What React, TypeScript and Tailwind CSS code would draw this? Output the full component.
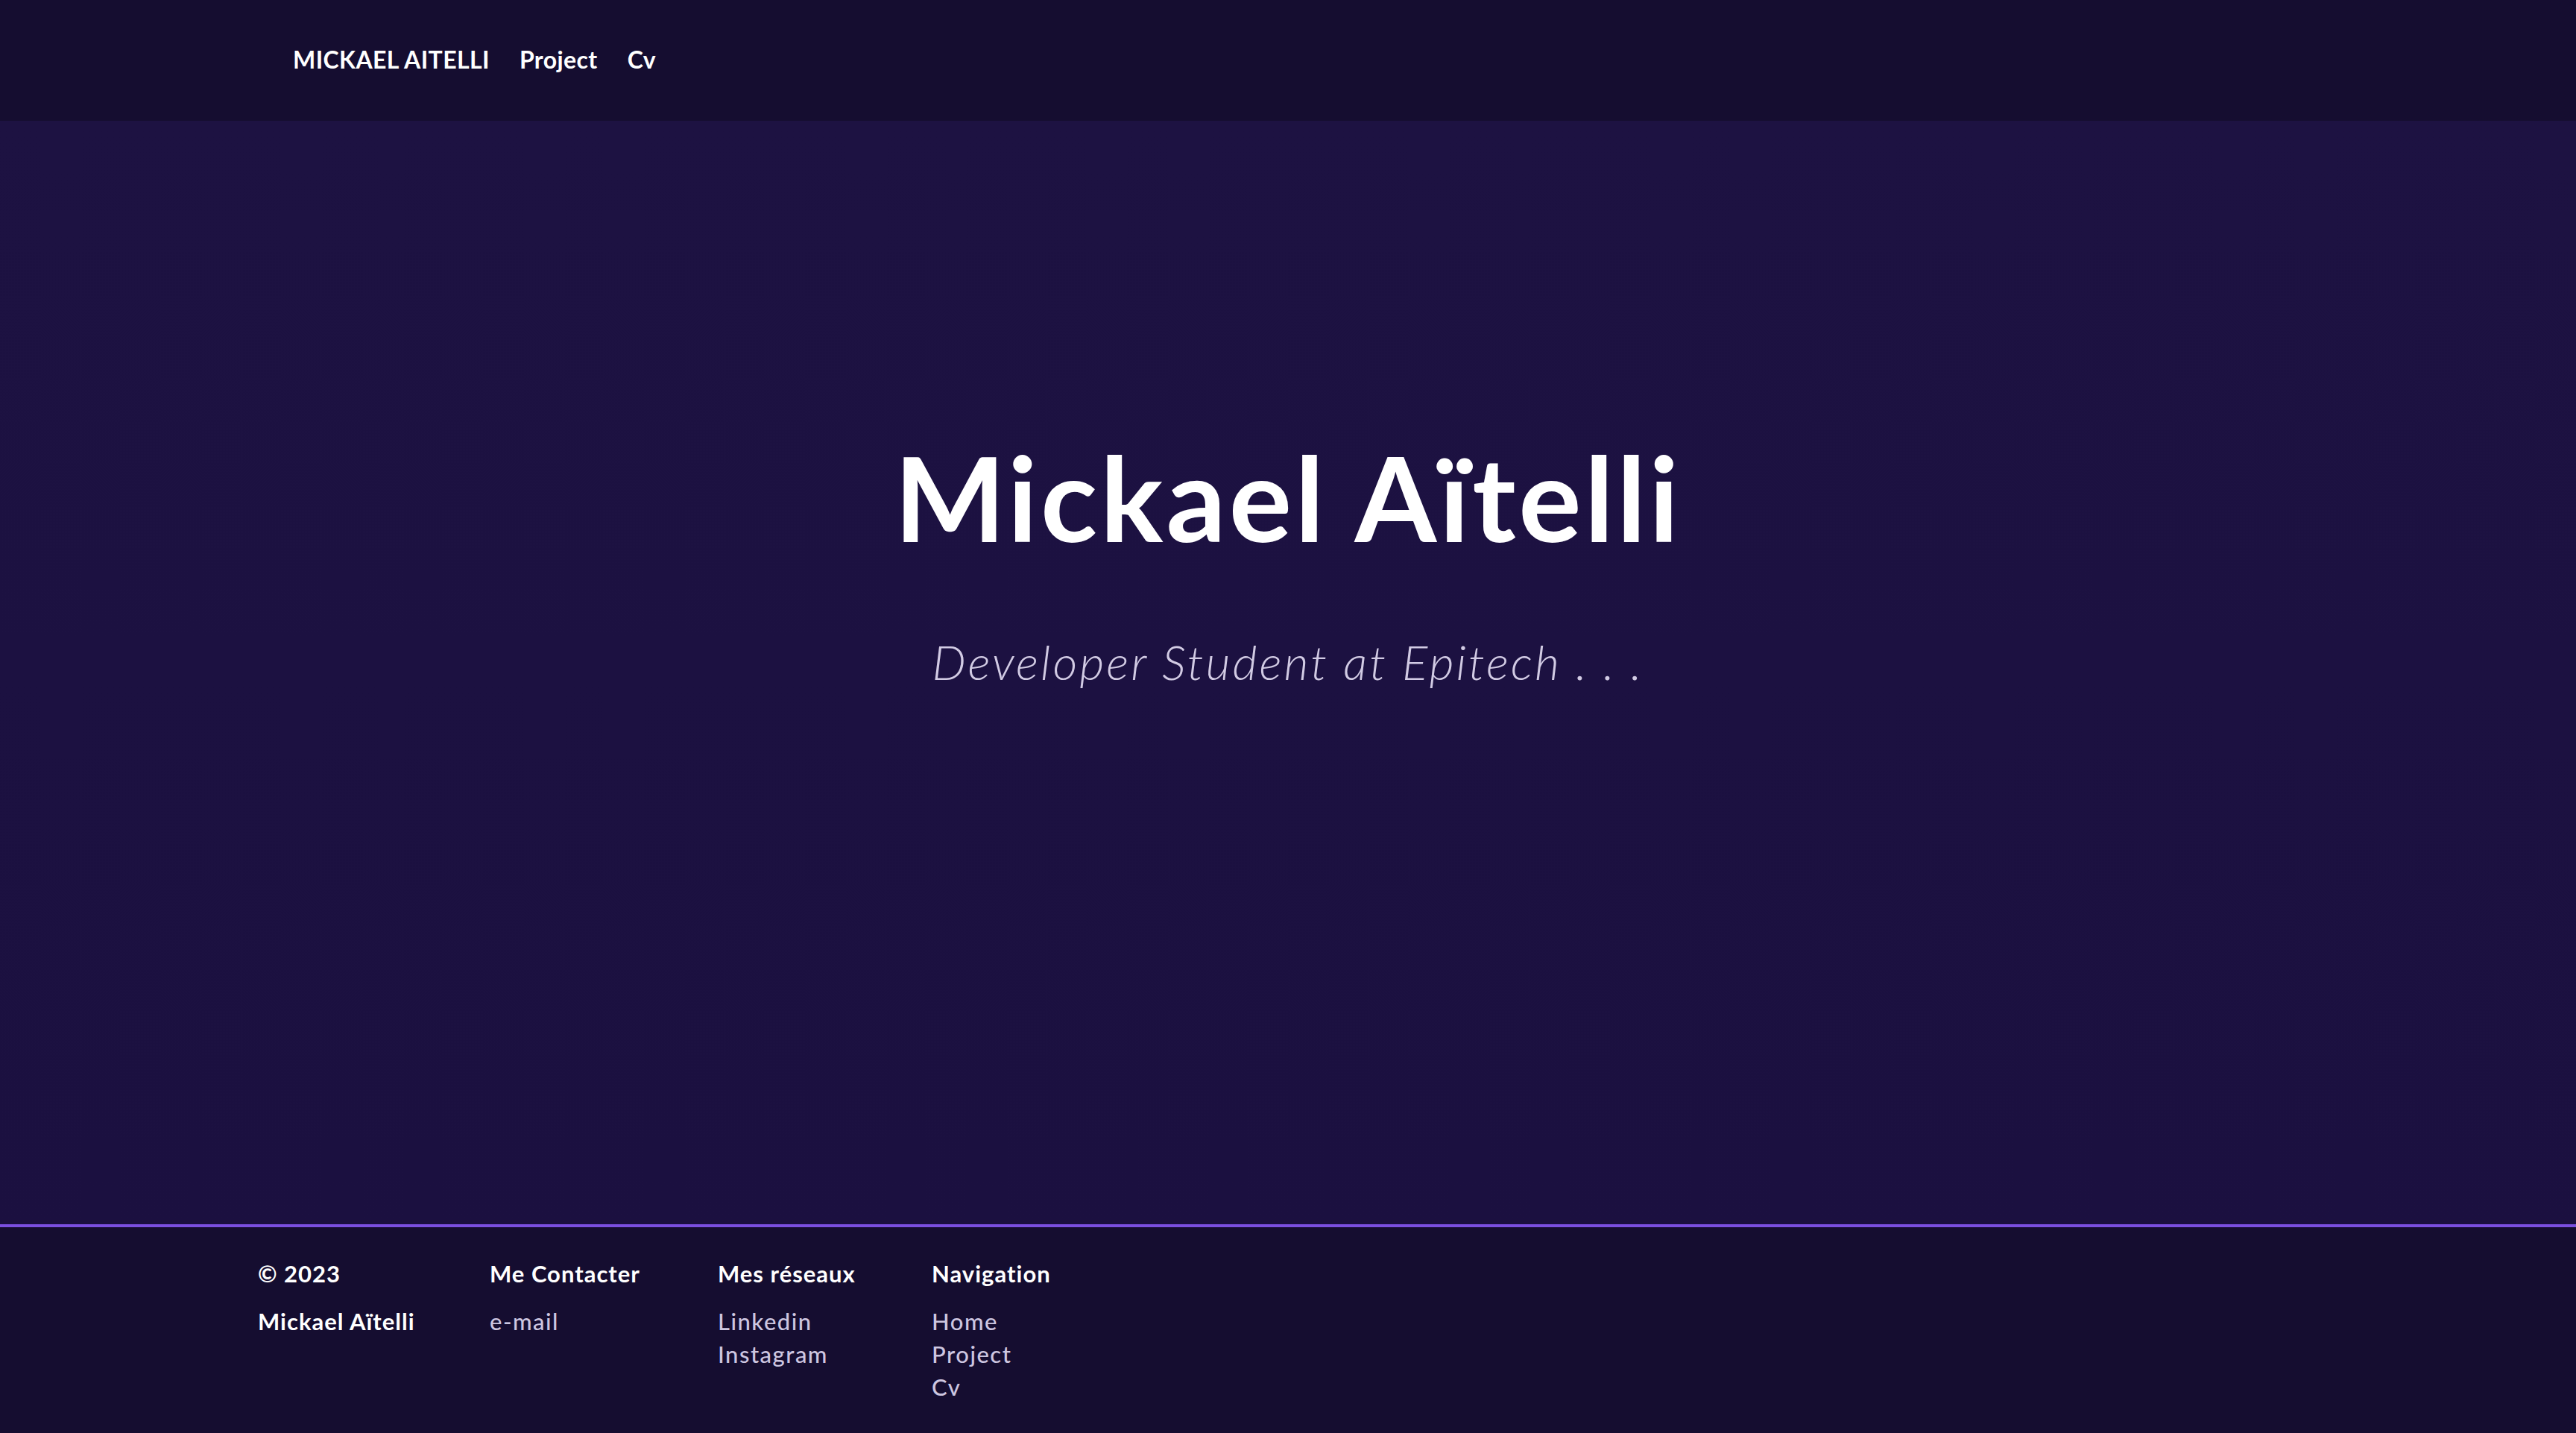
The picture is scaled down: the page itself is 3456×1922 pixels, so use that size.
import React from "react";

const font = { fontFamily: '"Lato", "Open Sans", sans-serif' };

export default function App() {
  return (
    <div className="flex h-[1922px] w-full flex-col bg-[#1d1240] text-white" style={font}>
      <header className="flex h-[162px] shrink-0 items-center gap-[40px] bg-[#150d30] pl-[393px] pb-[2px] text-[32px] font-bold tracking-[0.4px]">
        <a>MICKAEL AITELLI</a>
        <a>Project</a>
        <a>Cv</a>
      </header>
      <main className="flex flex-1 flex-col items-center bg-gradient-to-b from-[#1d1242] to-[#1b1040] pt-[410px]">
        <h1 className="text-[158px] font-bold leading-[1.2] tracking-[4px]">Mickael Aïtelli</h1>
        <p className="mt-[88px] text-[64px] font-light italic leading-[1.2] tracking-[3px] text-[#d2cbe4]">
          Developer Student at Epitech . . .
        </p>
      </main>
      <footer className="h-[280px] shrink-0 border-t-4 border-[#7b4fe0] bg-[#150d30] pl-[346px] pt-[40px] text-[31px] leading-[44px] tracking-[1px]">
        <div className="grid grid-cols-[311px_306px_287px_auto]">
          <div className="flex flex-col">
            <span className="font-bold">© 2023</span>
            <span className="mt-[20px] font-bold">Mickael Aïtelli</span>
          </div>
          <div className="flex flex-col">
            <span className="font-bold">Me Contacter</span>
            <a className="mt-[20px] font-medium tracking-[1.5px] text-[#cdc6e0]">e-mail</a>
          </div>
          <div className="flex flex-col">
            <span className="font-bold">Mes réseaux</span>
            <a className="mt-[20px] font-medium tracking-[1.5px] text-[#cdc6e0]">Linkedin</a>
            <a className="font-medium tracking-[1.5px] text-[#cdc6e0]">Instagram</a>
          </div>
          <div className="flex flex-col">
            <span className="font-bold">Navigation</span>
            <a className="mt-[20px] font-medium tracking-[1.5px] text-[#cdc6e0]">Home</a>
            <a className="font-medium tracking-[1.5px] text-[#cdc6e0]">Project</a>
            <a className="font-medium tracking-[1.5px] text-[#cdc6e0]">Cv</a>
          </div>
        </div>
      </footer>
    </div>
  );
}
